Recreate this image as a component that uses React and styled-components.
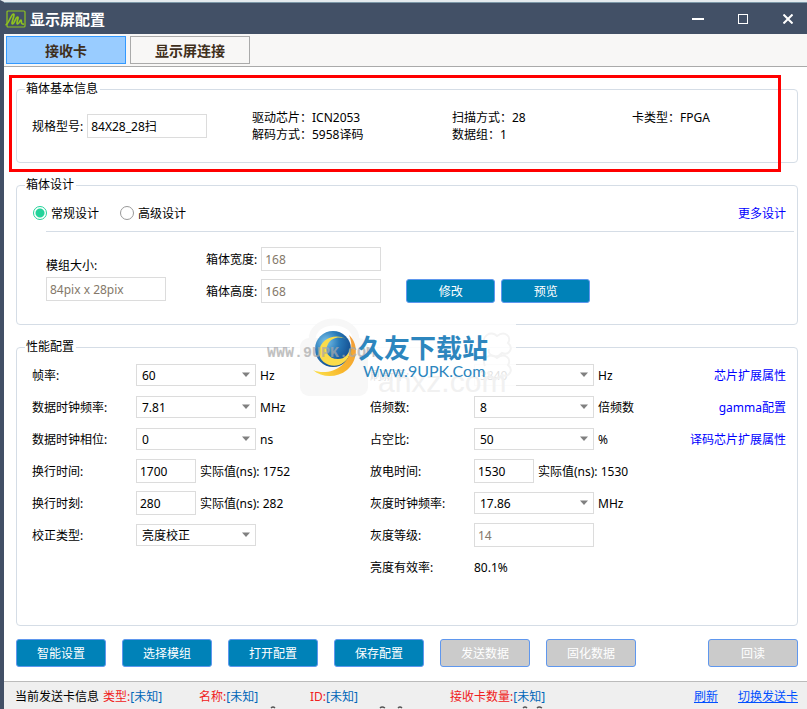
import React, { useState } from "react";
import styled, { createGlobalStyle } from "styled-components";

const GlobalStyle = createGlobalStyle`
  * {
    box-sizing: border-box;
  }
  body {
    margin: 0;
    background-color: #ffffff;
    color: #000000;
    font-family: "Noto Sans", "Noto Sans CJK SC", sans-serif;
    font-size: 12px;
    line-height: 17px;
  }
  button, input, select {
    font: inherit;
  }
`;

const Window = styled.div`
  min-height: 100vh;
  display: flex;
  flex-direction: column;
  border-left: 4px solid #425066;
  border-top: 2px solid #e4eaee;
  box-shadow: inset 1px 0 0 #ffffff;
  overflow: hidden;
`;

const TitleBar = styled.header`
  height: 32px;
  padding: 0 9px 0 1px;
  display: flex;
  align-items: center;
  background-color: #425066;
  border-top: 1px solid #7d98a8;
  color: #ffffff;
`;

const Title = styled.h1`
  flex: 1;
  margin: 0 0 0 4px;
  font-size: 15px;
  font-weight: bold;
  line-height: 20px;
`;

const WindowButtons = styled.div`
  display: flex;
  gap: 25px;
`;

const WindowButton = styled.button`
  width: 20px;
  height: 20px;
  padding: 0;
  border: none;
  background: none;
  color: #ffffff;
  display: flex;
  align-items: center;
  justify-content: center;
`;

const TabBar = styled.nav`
  height: 33px;
  padding: 2px;
  display: flex;
  gap: 4px;
  background-color: #f8f7f6;
  border-bottom: 1px solid #aaaaaa;
`;

const Tab = styled.button`
  width: 120px;
  height: 28px;
  padding: 0;
  border: 1px solid ${(props) => (props.$active ? "#3399ff" : "#aaaaaa")};
  background-color: ${(props) => (props.$active ? "#99ccff" : "#f8f7f6")};
  color: #3f2f1c;
  font-size: 14px;
  font-weight: bold;
`;

const Main = styled.main`
  flex: 1;
  padding: 13px 9px 14px 12px;
  display: flex;
  flex-direction: column;
  gap: 13px;
`;

const Section = styled.div`
  position: relative;
`;

const Highlight = styled.div`
  position: absolute;
  top: -5px;
  right: 17px;
  bottom: -9px;
  left: -7px;
  border: 3px solid #ff0000;
  pointer-events: none;
`;

const Group = styled.fieldset`
  margin: 0;
  min-width: 0;
  padding: ${(props) => props.$padding};
  border: 1px solid #d5dde6;
  border-radius: 4px;
`;

const Legend = styled.legend`
  margin-left: ${(props) => props.$indent};
  padding: 0 2px 0 1px;
  line-height: 18px;
`;

const InfoGrid = styled.div`
  display: grid;
  grid-template-columns: 220px 200px 180px 1fr;
`;

const Info = styled.div`
  white-space: nowrap;
`;

const Field = styled.div`
  display: flex;
  align-items: center;
  gap: 4px;
`;

const StackedField = styled.div`
  display: flex;
  flex-direction: column;
  gap: 3px;
  padding-bottom: 2px;
`;

const Input = styled.input`
  width: ${(props) => (props.$small ? "60px" : "120px")};
  height: 24px;
  padding: 0 3px;
  border: 1px solid #dcdcdc;
  background-color: #ffffff;
  color: #000000;

  &:disabled {
    color: #84786a;
  }
`;

const SelectBox = styled.span`
  display: grid;
  align-items: center;
  width: 120px;

  & > * {
    grid-area: 1 / 1;
  }
  & > svg {
    justify-self: end;
    margin: 0 6px 2px 0;
    pointer-events: none;
  }
`;

const Select = styled.select`
  width: 100%;
  height: 22px;
  padding: 0 20px 0 5px;
  appearance: none;
  border: 1px solid #dcdcdc;
  border-radius: 0;
  background-color: #ffffff;
  color: #000000;
`;

const DesignHeader = styled.div`
  height: 22px;
  display: flex;
  align-items: center;
  gap: 21px;
`;

const RadioLabel = styled.label`
  display: flex;
  align-items: center;
  gap: 4px;
`;

const Radio = styled.input`
  appearance: none;
  width: 14px;
  height: 14px;
  margin: 0;
  border: 1px solid #999999;
  border-radius: 50%;
  background-color: #ffffff;

  &:checked {
    border-color: #22d39a;
    background-image: radial-gradient(circle, #22d39a 4px, #ffffff 5px);
  }
`;

const Link = styled.a`
  color: #0000ff;
  text-decoration: none;
  white-space: nowrap;
`;

const PushRight = styled.div`
  margin-left: auto;
`;

const Divider = styled.hr`
  width: 100%;
  margin: 7px 0 15px;
  border: none;
  border-top: 1px solid #d5dde6;
`;

const DividerWrap = styled.div`
  padding: 0 0 0 13px;
  margin-right: -8px;
`;

const DesignBody = styled.div`
  display: flex;
  align-items: flex-end;
  padding-left: 13px;
`;

const SizeFields = styled.div`
  display: flex;
  flex-direction: column;
  gap: 8px;
  margin: 0 25px 0 40px;
`;

const DesignButtons = styled.div`
  display: flex;
  gap: 6px;
`;

const Button = styled.button`
  width: ${(props) => (props.$compact ? "89px" : "90px")};
  height: ${(props) => (props.$compact ? "24px" : "28px")};
  padding: 0;
  border: 1px solid #5f97ee;
  border-radius: 3px;
  background-color: #0082b8;
  color: #ffffff;

  &:disabled {
    background-color: #cbcbcb;
  }
`;

const PerformanceGrid = styled.div`
  display: grid;
  grid-template-columns: 104px 234px 104px 1fr auto;
  grid-auto-rows: 32px;
  align-items: center;
`;

const Value = styled.div`
  display: flex;
  align-items: center;
  gap: 4px;
  white-space: nowrap;
`;

const LinkCell = styled.div`
  text-align: right;
`;

const Actions = styled.div`
  display: flex;
  gap: 16px;
`;

const StatusBar = styled.footer`
  position: relative;
  height: 28px;
  padding: 6px 9px 0 11px;
  display: flex;
  background-color: #efefef;
  border-top: 1px solid #bbbbbb;
  white-space: nowrap;
`;

const StatusTitle = styled.span`
  width: 88px;
`;

const StatusItem = styled.span`
  width: ${(props) => props.$width};
  color: #0066b8;
`;

const StatusName = styled.span`
  color: #f02020;
`;

const StatusLinks = styled.div`
  margin-left: auto;
  display: flex;
  gap: 20px;
`;

const StatusLink = styled.a`
  color: #0050ff;
  text-decoration: underline;
`;

const Specks = styled.svg`
  position: absolute;
  bottom: 0;
  left: 264px;
  pointer-events: none;
`;

const Watermark = styled.div`
  position: absolute;
  top: -22px;
  left: 250px;
  width: 252px;
  height: 82px;
  pointer-events: none;
`;

const Arrow = () => (
  <svg width="8" height="5" viewBox="0 0 8 5">
    <path d="M0 0.5h8L4 5z" fill="#808080" />
  </svg>
);

const Logo = () => (
  <svg width="21" height="18" viewBox="0 0 21 18" fill="none" stroke="#8fc31f">
    <rect x="2" y="1" width="18" height="16" rx="1" strokeWidth="1.2" />
    <path
      d="M0.5 15C4 14 6 4 8.500 4c2 0-3 10-1 10 2 0 3-7 5-7 2 0-2 6 0 7 2 0 2-4 3.500-4 1 0-1 5 3 4"
      strokeWidth="1.700"
    />
  </svg>
);

const SiteMark = () => (
  <Watermark>
    <svg width="252" height="82" viewBox="0 0 252 82" aria-hidden="true">
      <defs>
        <radialGradient id="globe" cx="30%" cy="30%" r="75%">
          <stop offset="0" stopColor="#7cc4ea" />
          <stop offset="0.5" stopColor="#2879b8" />
          <stop offset="1" stopColor="#134c8e" />
        </radialGradient>
        <linearGradient id="crescent" x1="1" y1="0" x2="0" y2="1">
          <stop offset="0" stopColor="#f29a3a" />
          <stop offset="0.6" stopColor="#f8b62c" />
          <stop offset="1" stopColor="#fce54e" />
        </linearGradient>
      </defs>
      <rect x="24" y="8" width="226" height="72" fill="#ffffff" opacity="0.88" />
      <rect x="34" y="22" width="68" height="58" rx="9" fill="#f7f7f7" />
      <path d="M46 24c0-24 44-24 44 0" fill="none" stroke="#f7f7f7" strokeWidth="7" />
      <g fill="none" stroke="#f3f3f3" strokeWidth="2">
        <path d="M219 28c-4-8 6-14 12-8 8-6 15 1 11 7 6 5 1 13-6 10-6 7-15 2-13-4" />
        <path d="M219 50c-4-8 6-14 12-8 8-6 15 1 11 7 6 5 1 13-6 10-6 7-15 2-13-4" />
      </g>
      <text x="112" y="76" fontFamily="Liberation Sans" fontSize="30" fill="#f1f1f1">
        anxz.com
      </text>
      <circle cx="67" cy="33" r="18" fill="url(#globe)" />
      <path
        d="M80 23C70 17 54 22 53 36C53 46 64 52 73 49C81 46 85 39 84 32C83 38 79 43 72 43C62 43 58 35 62 28C65 22 73 20 80 23Z"
        fill="#fbdc4a"
      />
      <path
        d="M83 19C93 28 92 45 81 54C71 62 56 62 47 54C56 58 68 56 75 50C85 42 88 30 83 19Z"
        fill="url(#crescent)"
      />
      <text
        x="1"
        y="41"
        fontFamily="Liberation Mono"
        fontSize="15"
        fontWeight="bold"
        fill="#a8a8a8"
        opacity="0.7"
      >
        WWW.9UPK.COM
      </text>
      <text
        x="92"
        y="42"
        fontFamily="Noto Sans CJK SC"
        fontSize="26"
        fontWeight="bold"
        fill="#2d86be"
      >
        久友下载站
      </text>
      <text x="97" y="61" fontFamily="Lato" fontSize="16" fill="#2d86be">
        Www.9UPK.Com
      </text>
    </svg>
  </Watermark>
);

const Dropdown = ({ id, value }) => (
  <SelectBox>
    <Select id={id} defaultValue={value}>
      <option>{value}</option>
    </Select>
    <Arrow />
  </SelectBox>
);

// left setting, right setting, link
const rows = [
  [
    { id: "frame", label: "帧率:", select: "60", unit: "Hz" },
    { id: "refresh", label: "刷新率:", select: "3840", unit: "Hz" },
    "芯片扩展属性",
  ],
  [
    { id: "clock", label: "数据时钟频率:", select: "7.81", unit: "MHz" },
    { id: "multiple", label: "倍频数:", select: "8", unit: "倍频数" },
    "gamma配置",
  ],
  [
    { id: "phase", label: "数据时钟相位:", select: "0", unit: "ns" },
    { id: "duty", label: "占空比:", select: "50", unit: "%" },
    "译码芯片扩展属性",
  ],
  [
    { id: "lineTime", label: "换行时间:", input: "1700", unit: "实际值(ns): 1752" },
    { id: "discharge", label: "放电时间:", input: "1530", unit: "实际值(ns): 1530" },
  ],
  [
    { id: "lineMoment", label: "换行时刻:", input: "280", unit: "实际值(ns): 282" },
    { id: "grayClock", label: "灰度时钟频率:", select: "17.86", unit: "MHz" },
  ],
  [
    { id: "correction", label: "校正类型:", select: "亮度校正" },
    { id: "grayLevel", label: "灰度等级:", input: "14", disabled: true },
  ],
  [null, { label: "亮度有效率:", text: "80.1%" }],
];

const Setting = ({ item }) => {
  if (!item) {
    return (
      <>
        <span />
        <span />
      </>
    );
  }
  return (
    <>
      {item.id ? <label htmlFor={item.id}>{item.label}</label> : <span>{item.label}</span>}
      <Value>
        {item.select && <Dropdown id={item.id} value={item.select} />}
        {item.input && (
          <Input
            id={item.id}
            $small={!item.disabled}
            disabled={item.disabled}
            defaultValue={item.input}
          />
        )}
        {item.text}
        {item.unit && <span>{item.unit}</span>}
      </Value>
    </>
  );
};

const App = () => {
  const [tab, setTab] = useState("接收卡");
  const [design, setDesign] = useState("常规设计");

  return (
    <Window>
      <GlobalStyle />
      <TitleBar>
        <Logo />
        <Title>显示屏配置</Title>
        <WindowButtons>
          <WindowButton aria-label="最小化">
            <svg width="12" height="12">
              <path d="M0 6h12" stroke="#fff" strokeWidth="2" />
            </svg>
          </WindowButton>
          <WindowButton aria-label="最大化">
            <svg width="10" height="10">
              <rect x="0.5" y="0.5" width="9" height="9" fill="none" stroke="#fff" />
            </svg>
          </WindowButton>
          <WindowButton aria-label="关闭">
            <svg width="10" height="10">
              <path d="M0.5 0.5l9 9M9.5 0.5l-9 9" stroke="#fff" strokeWidth="2" />
            </svg>
          </WindowButton>
        </WindowButtons>
      </TitleBar>

      <TabBar>
        {["接收卡", "显示屏连接"].map((name) => (
          <Tab key={name} $active={tab === name} onClick={() => setTab(name)}>
            {name}
          </Tab>
        ))}
      </TabBar>

      <Main>
        <Section>
          <Group $padding="11px 11px 19px 15px">
            <Legend $indent="-7px">箱体基本信息</Legend>
            <InfoGrid>
              <Field>
                <label htmlFor="model">规格型号:</label>
                <Input id="model" defaultValue="84X28_28扫" />
              </Field>
              <Info>
                驱动芯片：ICN2053
                <br />
                解码方式：5958译码
              </Info>
              <Info>
                扫描方式：28
                <br />
                数据组：1
              </Info>
              <Info>卡类型：FPGA</Info>
            </InfoGrid>
          </Group>
          <Highlight />
        </Section>

        <Group $padding="8px 11px 21px 16px">
          <Legend $indent="-8px">箱体设计</Legend>
          <DesignHeader>
            {["常规设计", "高级设计"].map((name) => (
              <RadioLabel key={name}>
                <Radio
                  type="radio"
                  name="design"
                  checked={design === name}
                  onChange={() => setDesign(name)}
                />
                {name}
              </RadioLabel>
            ))}
            <PushRight>
              <Link href="#more">更多设计</Link>
            </PushRight>
          </DesignHeader>
          <DividerWrap>
            <Divider />
          </DividerWrap>
          <DesignBody>
            <StackedField>
              <label htmlFor="module">模组大小:</label>
              <Input id="module" disabled defaultValue="84pix x 28pix" />
            </StackedField>
            <SizeFields>
              <Field>
                <label htmlFor="boxWidth">箱体宽度:</label>
                <Input id="boxWidth" disabled defaultValue="168" />
              </Field>
              <Field>
                <label htmlFor="boxHeight">箱体高度:</label>
                <Input id="boxHeight" disabled defaultValue="168" />
              </Field>
            </SizeFields>
            <DesignButtons>
              <Button $compact>修改</Button>
              <Button $compact>预览</Button>
            </DesignButtons>
          </DesignBody>
        </Group>

        <Section>
          <Group $padding="3px 11px 42px 15px">
            <Legend $indent="-7px">性能配置</Legend>
            <PerformanceGrid>
              {rows.map(([left, right, link], index) => (
                <React.Fragment key={index}>
                  <Setting item={left} />
                  <Setting item={right} />
                  <LinkCell>{link && <Link href="#advanced">{link}</Link>}</LinkCell>
                </React.Fragment>
              ))}
            </PerformanceGrid>
          </Group>
          <SiteMark />
        </Section>

        <Actions>
          <Button>智能设置</Button>
          <Button>选择模组</Button>
          <Button>打开配置</Button>
          <Button>保存配置</Button>
          <Button disabled>发送数据</Button>
          <Button disabled>固化数据</Button>
          <PushRight>
            <Button disabled>回读</Button>
          </PushRight>
        </Actions>
      </Main>

      <StatusBar>
        <StatusTitle>当前发送卡信息</StatusTitle>
        <StatusItem $width="96px">
          <StatusName>类型:</StatusName>[未知]
        </StatusItem>
        <StatusItem $width="111px">
          <StatusName>名称:</StatusName>[未知]
        </StatusItem>
        <StatusItem $width="140px">
          <StatusName>ID:</StatusName>[未知]
        </StatusItem>
        <StatusItem $width="100px">
          <StatusName>接收卡数量:</StatusName>[未知]
        </StatusItem>
        <StatusLinks>
          <StatusLink href="#refresh">刷新</StatusLink>
          <StatusLink href="#switch">切换发送卡</StatusLink>
        </StatusLinks>
        <Specks width="280" height="3" viewBox="0 0 280 3" aria-hidden="true">
          <path
            d="M3 2q2-2 4 0M112 2q2-2 5 0M130 2q2-2 4 0M255 2q2-2 4 0M269 2q2-2 5 0"
            stroke="#555555"
            strokeWidth="1.500"
            fill="none"
          />
        </Specks>
      </StatusBar>
    </Window>
  );
};

export default App;
